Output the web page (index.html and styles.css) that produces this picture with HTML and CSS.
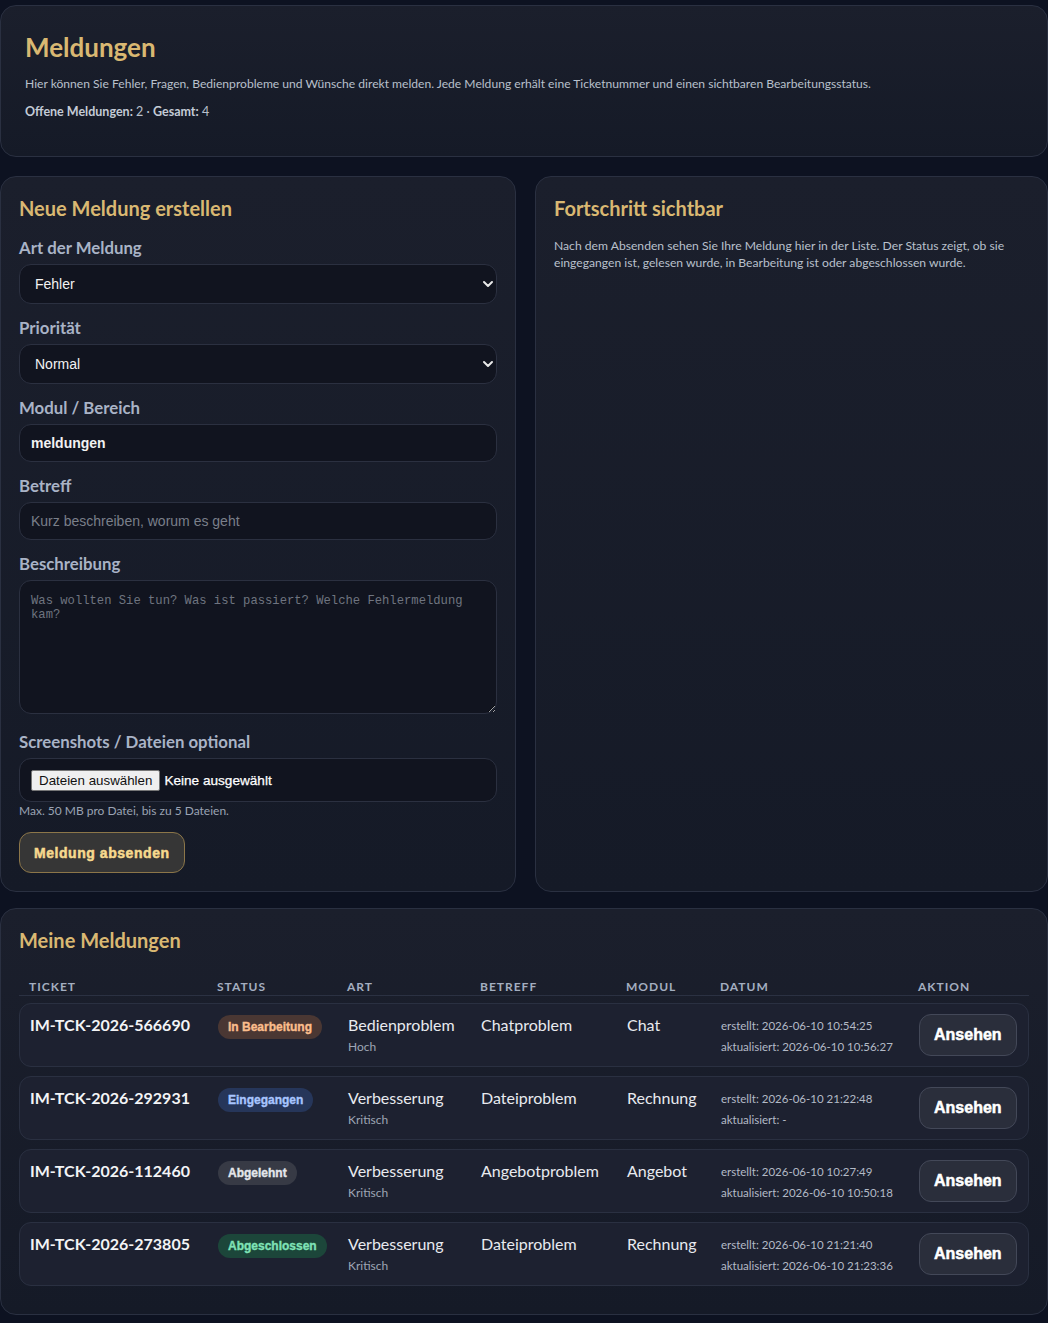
FILE: index.html
```html
<!DOCTYPE html>
<html lang="de">
<head>
<meta charset="utf-8">
<title>Meldungen</title>
<link rel="stylesheet" href="styles.css">
</head>
<body>
<main class="page">
  <section class="card hero">
    <h1 class="hero-title">Meldungen</h1>
    <p class="lead">Hier können Sie Fehler, Fragen, Bedienprobleme und Wünsche direkt melden. Jede Meldung erhält eine Ticketnummer und einen sichtbaren Bearbeitungsstatus.</p>
    <p class="stats"><strong>Offene Meldungen:</strong> 2 · <strong>Gesamt:</strong> 4</p>
  </section>

  <div class="columns">
    <section class="card form-card">
      <h2 class="card-title">Neue Meldung erstellen</h2>
      <form class="form">
        <div class="field">
          <label class="label" for="art">Art der Meldung</label>
          <div class="select-wrap">
            <select id="art" class="control select">
              <option>Fehler</option>
              <option>Frage</option>
              <option>Bedienproblem</option>
              <option>Verbesserung</option>
            </select>
            <svg class="chevron" width="12" height="8" viewBox="0 0 12 8"><path d="M2 2 6 6l4-4" fill="none" stroke="#e8e8e8" stroke-width="2" stroke-linecap="round" stroke-linejoin="round"/></svg>
          </div>
        </div>
        <div class="field">
          <label class="label" for="prio">Priorität</label>
          <div class="select-wrap">
            <select id="prio" class="control select">
              <option>Normal</option>
              <option>Hoch</option>
              <option>Kritisch</option>
            </select>
            <svg class="chevron" width="12" height="8" viewBox="0 0 12 8"><path d="M2 2 6 6l4-4" fill="none" stroke="#e8e8e8" stroke-width="2" stroke-linecap="round" stroke-linejoin="round"/></svg>
          </div>
        </div>
        <div class="field">
          <label class="label" for="modul">Modul / Bereich</label>
          <input id="modul" class="control input input-strong" type="text" value="meldungen">
        </div>
        <div class="field">
          <label class="label" for="betreff">Betreff</label>
          <input id="betreff" class="control input" type="text" placeholder="Kurz beschreiben, worum es geht">
        </div>
        <div class="field">
          <label class="label" for="beschreibung">Beschreibung</label>
          <textarea id="beschreibung" class="control textarea" placeholder="Was wollten Sie tun? Was ist passiert? Welche Fehlermeldung kam?"></textarea>
        </div>
        <div class="field field-files">
          <span class="label">Screenshots / Dateien optional</span>
          <div class="control filebox">
            <span class="file-btn">Dateien auswählen</span>
            <span class="file-name">Keine ausgewählt</span>
          </div>
          <p class="hint">Max. 50 MB pro Datei, bis zu 5 Dateien.</p>
        </div>
        <button type="button" class="submit">Meldung absenden</button>
      </form>
    </section>

    <section class="card info-card">
      <h2 class="card-title">Fortschritt sichtbar</h2>
      <p class="info-text">Nach dem Absenden sehen Sie Ihre Meldung hier in der Liste. Der Status zeigt, ob sie eingegangen ist, gelesen wurde, in Bearbeitung ist oder abgeschlossen wurde.</p>
    </section>
  </div>

  <section class="card list-card">
    <h2 class="card-title list-title">Meine Meldungen</h2>
    <div class="table">
      <div class="thead">
        <span>Ticket</span><span>Status</span><span>Art</span><span>Betreff</span><span>Modul</span><span>Datum</span><span>Aktion</span>
      </div>

      <div class="row">
        <div class="cell ticket">IM-TCK-2026-566690</div>
        <div class="cell"><span class="badge badge-progress">In Bearbeitung</span></div>
        <div class="cell"><div class="main">Bedienproblem</div><div class="sub">Hoch</div></div>
        <div class="cell"><div class="main">Chatproblem</div></div>
        <div class="cell"><div class="main">Chat</div></div>
        <div class="cell dates"><div>erstellt: 2026-06-10 10:54:25</div><div>aktualisiert: 2026-06-10 10:56:27</div></div>
        <div class="cell"><button type="button" class="view">Ansehen</button></div>
      </div>

      <div class="row">
        <div class="cell ticket">IM-TCK-2026-292931</div>
        <div class="cell"><span class="badge badge-new">Eingegangen</span></div>
        <div class="cell"><div class="main">Verbesserung</div><div class="sub">Kritisch</div></div>
        <div class="cell"><div class="main">Dateiproblem</div></div>
        <div class="cell"><div class="main">Rechnung</div></div>
        <div class="cell dates"><div>erstellt: 2026-06-10 21:22:48</div><div>aktualisiert: -</div></div>
        <div class="cell"><button type="button" class="view">Ansehen</button></div>
      </div>

      <div class="row">
        <div class="cell ticket">IM-TCK-2026-112460</div>
        <div class="cell"><span class="badge badge-rejected">Abgelehnt</span></div>
        <div class="cell"><div class="main">Verbesserung</div><div class="sub">Kritisch</div></div>
        <div class="cell"><div class="main">Angebotproblem</div></div>
        <div class="cell"><div class="main">Angebot</div></div>
        <div class="cell dates"><div>erstellt: 2026-06-10 10:27:49</div><div>aktualisiert: 2026-06-10 10:50:18</div></div>
        <div class="cell"><button type="button" class="view">Ansehen</button></div>
      </div>

      <div class="row">
        <div class="cell ticket">IM-TCK-2026-273805</div>
        <div class="cell"><span class="badge badge-done">Abgeschlossen</span></div>
        <div class="cell"><div class="main">Verbesserung</div><div class="sub">Kritisch</div></div>
        <div class="cell"><div class="main">Dateiproblem</div></div>
        <div class="cell"><div class="main">Rechnung</div></div>
        <div class="cell dates"><div>erstellt: 2026-06-10 21:21:40</div><div>aktualisiert: 2026-06-10 21:23:36</div></div>
        <div class="cell"><button type="button" class="view">Ansehen</button></div>
      </div>
    </div>
  </section>
</main>
</body>
</html>
```

FILE: styles.css
```css
* {
  box-sizing: border-box;
}

html,
body {
  margin: 0;
}

body {
  background: #0d1221;
  font-family: Lato, "Open Sans", sans-serif;
  color: #e5e7eb;
}

.page {
  padding: 5px 0 9px;
  display: flex;
  flex-direction: column;
}

/* shared panel look */
.card {
  background: linear-gradient(180deg, #1b1f2c 0%, #151a27 100%);
  border: 1px solid #2a3041;
  border-radius: 16px;
}

/* intro block */
.hero {
  padding: 26px 24px 36px;
  margin-bottom: 19px;
}

.hero-title {
  margin: 0 0 12px;
  font-size: 26px;
  line-height: 31px;
  font-weight: 700;
  color: #d9b872;
}

.lead,
.stats {
  margin: 0;
  font-size: 12.1px;
  line-height: 17px;
  color: #b9c0cc;
}

.lead {
  margin-bottom: 11px;
}

.stats {
  font-size: 12.5px;
}

.stats strong {
  font-weight: 700;
  color: #c4cbd6;
}

/* two column area */
.columns {
  display: grid;
  grid-template-columns: 516px 1fr;
  gap: 19px;
  margin-bottom: 16px;
}

.form-card,
.info-card {
  padding: 18px;
}

.card-title {
  margin: 0;
  font-size: 20px;
  line-height: 26px;
  font-weight: 700;
  color: #d9b872;
}

.info-text {
  margin: 16px 0 0;
  font-size: 12.15px;
  line-height: 17px;
  color: #b9c0cc;
}

/* form */
.form {
  display: flex;
  flex-direction: column;
  margin-top: 16px;
}

.field {
  display: flex;
  flex-direction: column;
  margin-bottom: 13px;
}

.label {
  font-size: 16.8px;
  line-height: 22px;
  font-weight: 700;
  color: #a9b3c6;
  margin-bottom: 5px;
}

.control {
  width: 100%;
  background: #11141f;
  border: 1px solid #2b3040;
  border-radius: 12px;
  color: #f2f2f2;
  font-family: "Liberation Sans", Arial, sans-serif;
  font-size: 14px;
  outline: none;
}

.select-wrap {
  position: relative;
}

.select {
  display: block;
  height: 40px;
  padding: 0 15px;
  appearance: none;
  -webkit-appearance: none;
}

.chevron {
  position: absolute;
  right: 3px;
  top: 16px;
  pointer-events: none;
}

.input {
  height: 38px;
  padding: 0 11px;
}

.input-strong {
  font-weight: 700;
}

.input::placeholder {
  color: #7a7f8a;
}

.textarea {
  display: block;
  height: 134px;
  padding: 13px 11px 11px;
  resize: vertical;
  font-family: "Liberation Mono", "DejaVu Sans Mono", monospace;
  font-size: 12.2px;
  line-height: 14px;
}

.textarea::placeholder {
  color: #6f7480;
}

.field-files {
  margin-top: 4px;
  margin-bottom: 0;
}

.filebox {
  height: 44px;
  padding: 0 11px;
  display: flex;
  align-items: center;
  gap: 4px;
}

.file-btn {
  display: inline-block;
  height: 21px;
  line-height: 19px;
  padding: 0 7px;
  background: #efefef;
  border: 1px solid #767676;
  border-radius: 2px;
  color: #111;
  font-size: 13.33px;
}

.file-name {
  color: #ffffff;
  font-size: 13.6px;
  -webkit-text-stroke: 0.25px #ffffff;
}

.hint {
  margin: 1px 0 0;
  font-size: 12px;
  line-height: 16px;
  color: #9aa3b3;
}

.submit {
  align-self: flex-start;
  margin-top: 13px;
  height: 41px;
  padding: 0 14px;
  background: #363636;
  border: 1px solid #8c7649;
  border-radius: 12px;
  color: #f7d98e;
  font-family: "Liberation Sans", Arial, sans-serif;
  font-size: 14px;
  font-weight: 700;
  -webkit-text-stroke: 0.5px #f7d98e;
  letter-spacing: 0.55px;
}

/* ticket list */
.list-card {
  padding: 18px 18px 28px;
}

.list-title {
  margin-bottom: 26px;
}

.table {
  display: flex;
  flex-direction: column;
}

.thead,
.row {
  display: grid;
  grid-template-columns: 188px 130px 133px 146px 94px 198px 1fr;
}

.thead {
  border-bottom: 1px solid #2b3142;
  margin-bottom: 7px;
}

.thead span {
  padding: 0 10px;
  font-size: 12px;
  line-height: 16px;
  font-weight: 700;
  letter-spacing: 1px;
  text-transform: uppercase;
  color: #a4aec0;
}

.row {
  background: #1d2130;
  border: 1px solid #2a3041;
  border-radius: 12px;
  margin-bottom: 9px;
}

.row:last-child {
  margin-bottom: 0;
}

.cell {
  padding: 10px;
  min-width: 0;
}

.ticket {
  font-size: 16px;
  line-height: 22px;
  font-weight: 700;
  color: #f3f4f6;
}

.main {
  font-size: 16px;
  line-height: 22px;
  color: #e8eaef;
  white-space: nowrap;
}

.sub {
  margin-top: 3px;
  font-size: 12px;
  line-height: 16px;
  color: #9ea6b5;
}

.badge {
  display: inline-block;
  margin-top: 1px;
  height: 24px;
  line-height: 24px;
  padding: 0 10px;
  border-radius: 12px;
  font-family: "Liberation Sans", Arial, sans-serif;
  font-size: 12px;
  font-weight: 700;
  -webkit-text-stroke: 0.35px currentColor;
}

.badge-progress {
  background: #4a3733;
  color: #fbbd8c;
}

.badge-new {
  background: #26365a;
  color: #a8c5ff;
}

.badge-rejected {
  background: #373a45;
  color: #e4e6eb;
}

.badge-done {
  background: #1c463a;
  color: #7fe2b6;
}

.dates {
  padding: 11px 10px 0;
  font-size: 11.5px;
  line-height: 21px;
  color: #b3bac6;
  white-space: nowrap;
}

.view {
  height: 42px;
  padding: 0 14px;
  background: #2a2e3b;
  border: 1px solid #434858;
  border-radius: 12px;
  color: #ffffff;
  font-family: "Liberation Sans", Arial, sans-serif;
  font-size: 16px;
  font-weight: 700;
  -webkit-text-stroke: 0.5px #ffffff;
}
```
